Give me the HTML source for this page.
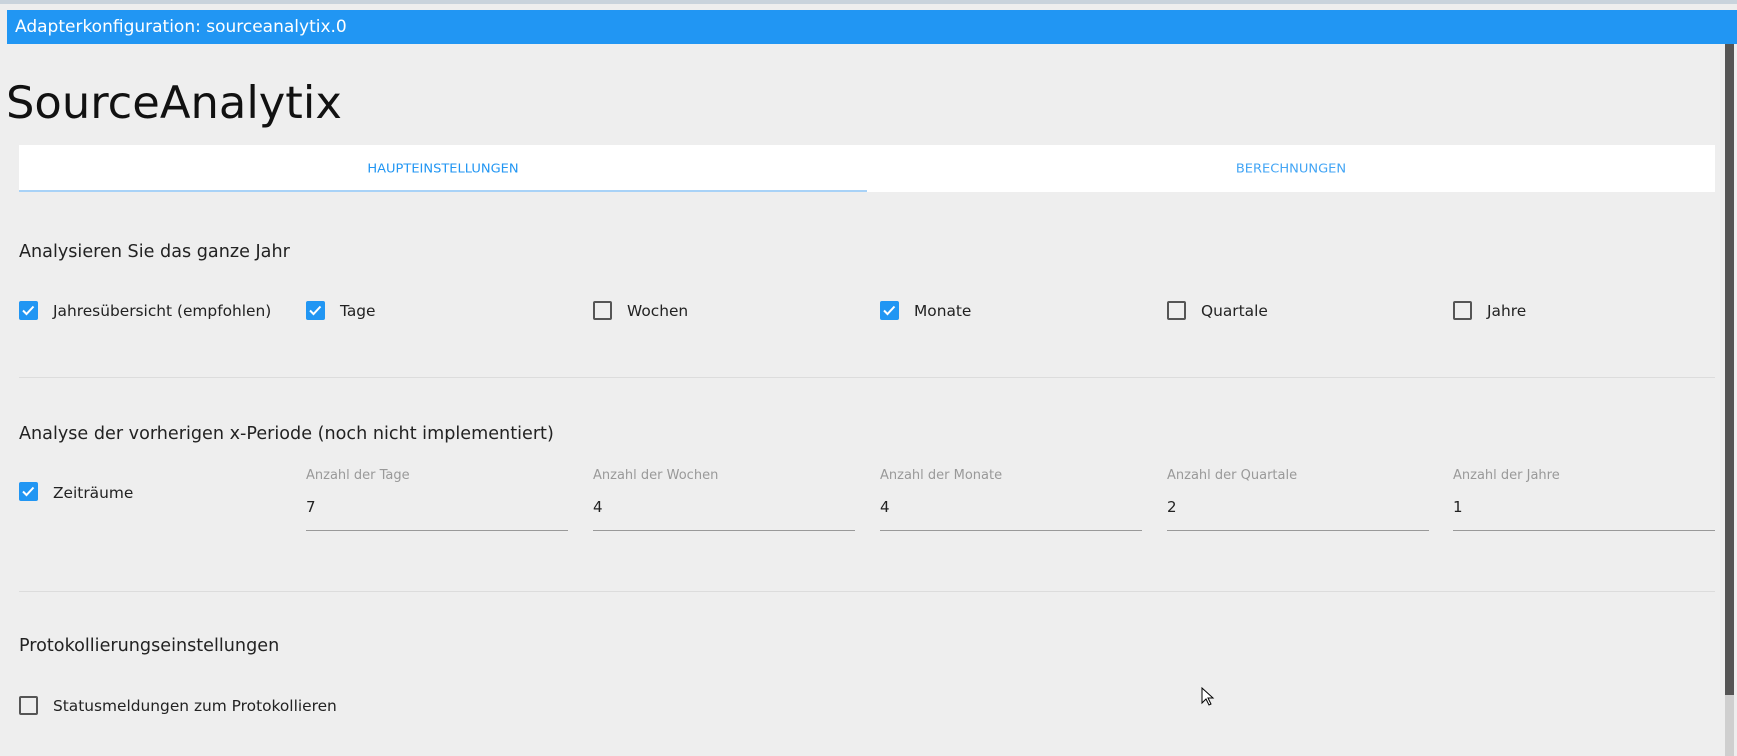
<!DOCTYPE html>
<html><head><meta charset="utf-8"><style>
*{margin:0;padding:0;box-sizing:border-box}
body{width:1737px;height:756px;background:#eeeeee;font-family:"DejaVu Sans","Liberation Sans",sans-serif;position:relative;overflow:hidden;color:#222}
.abs{position:absolute}
.top{left:0;top:0;width:1737px;height:4px;background:#c9d3dc}
.bar{left:7px;top:10px;width:1730px;height:34px;background:#2196f3;color:#fff;font-size:17px;line-height:35px;padding-left:8px}
.title{left:6px;top:73px;font-size:44.8px;color:#111;line-height:60px}
.tabs{left:19px;top:145px;width:1696px;height:47px;background:#fff}
.tab{top:1px;height:47px;line-height:47px;text-align:center;font-size:13px;color:#2196f3;width:848px;transform:scaleY(.92)}
.ul{left:19px;top:190px;width:848px;height:2px;background:#a8d2f7}
.h{font-size:17.6px;color:#222}
.cb{width:19px;height:19px;border-radius:2px}
.on{background:#2196f3}
.off{border:2px solid #555}
.cb svg{display:block}
.lbl{font-size:15.4px;color:#222}
.div{left:19px;width:1696px;height:1px;background:#dcdcdc}
.fl{font-size:13px;color:#999}
.fv{font-size:15px;color:#222}
.fu{height:1px;background:#999;width:262px}
.sb{left:1725px;top:44px;width:9px;height:651px;background:#555}
.sb2{left:1725px;top:695px;width:9px;height:61px;background:#cfcfcf}
</style></head><body>
<div class="abs top"></div>
<div class="abs bar">Adapterkonfiguration: sourceanalytix.0</div>
<div class="abs title">SourceAnalytix</div>
<div class="abs tabs">
<div class="abs tab" style="left:0">HAUPTEINSTELLUNGEN</div>
<div class="abs tab" style="left:848px;color:#42a5f5">BERECHNUNGEN</div>
</div>
<div class="abs ul"></div>

<div class="abs h" style="left:19px;top:242px">Analysieren Sie das ganze Jahr</div>

<div class="abs cb on" style="left:19px;top:301px"><svg width="19" height="19"><path d="M4 9.5l3.5 3.5 7-7.5" stroke="#fff" stroke-width="2" fill="none"/></svg></div>
<div class="abs lbl" style="left:53px;top:302px">Jahresübersicht (empfohlen)</div>
<div class="abs cb on" style="left:306px;top:301px"><svg width="19" height="19"><path d="M4 9.5l3.5 3.5 7-7.5" stroke="#fff" stroke-width="2" fill="none"/></svg></div>
<div class="abs lbl" style="left:340px;top:302px">Tage</div>
<div class="abs cb off" style="left:593px;top:301px"></div>
<div class="abs lbl" style="left:627px;top:302px">Wochen</div>
<div class="abs cb on" style="left:880px;top:301px"><svg width="19" height="19"><path d="M4 9.5l3.5 3.5 7-7.5" stroke="#fff" stroke-width="2" fill="none"/></svg></div>
<div class="abs lbl" style="left:914px;top:302px">Monate</div>
<div class="abs cb off" style="left:1167px;top:301px"></div>
<div class="abs lbl" style="left:1201px;top:302px">Quartale</div>
<div class="abs cb off" style="left:1453px;top:301px"></div>
<div class="abs lbl" style="left:1487px;top:302px">Jahre</div>

<div class="abs div" style="top:377px"></div>

<div class="abs h" style="left:19px;top:424px">Analyse der vorherigen x-Periode (noch nicht implementiert)</div>

<div class="abs cb on" style="left:19px;top:482px"><svg width="19" height="19"><path d="M4 9.5l3.5 3.5 7-7.5" stroke="#fff" stroke-width="2" fill="none"/></svg></div>
<div class="abs lbl" style="left:53px;top:484px">Zeiträume</div>

<div class="abs fl" style="left:306px;top:468px">Anzahl der Tage</div>
<div class="abs fv" style="left:306px;top:498px">7</div>
<div class="abs fu" style="left:306px;top:530px"></div>
<div class="abs fl" style="left:593px;top:468px">Anzahl der Wochen</div>
<div class="abs fv" style="left:593px;top:498px">4</div>
<div class="abs fu" style="left:593px;top:530px"></div>
<div class="abs fl" style="left:880px;top:468px">Anzahl der Monate</div>
<div class="abs fv" style="left:880px;top:498px">4</div>
<div class="abs fu" style="left:880px;top:530px"></div>
<div class="abs fl" style="left:1167px;top:468px">Anzahl der Quartale</div>
<div class="abs fv" style="left:1167px;top:498px">2</div>
<div class="abs fu" style="left:1167px;top:530px"></div>
<div class="abs fl" style="left:1453px;top:468px">Anzahl der Jahre</div>
<div class="abs fv" style="left:1453px;top:498px">1</div>
<div class="abs fu" style="left:1453px;top:530px"></div>

<div class="abs div" style="top:591px"></div>

<div class="abs h" style="left:19px;top:636px">Protokollierungseinstellungen</div>

<div class="abs cb off" style="left:19px;top:696px"></div>
<div class="abs lbl" style="left:53px;top:697px">Statusmeldungen zum Protokollieren</div>

<svg class="abs" style="left:1201px;top:687px" width="14" height="20"><path d="M1 1v15l4-4 3 6 2-1-3-6h5z" fill="#fff" stroke="#000" stroke-width="1"/></svg>

<div class="abs sb"></div>
<div class="abs sb2"></div>
</body></html>
